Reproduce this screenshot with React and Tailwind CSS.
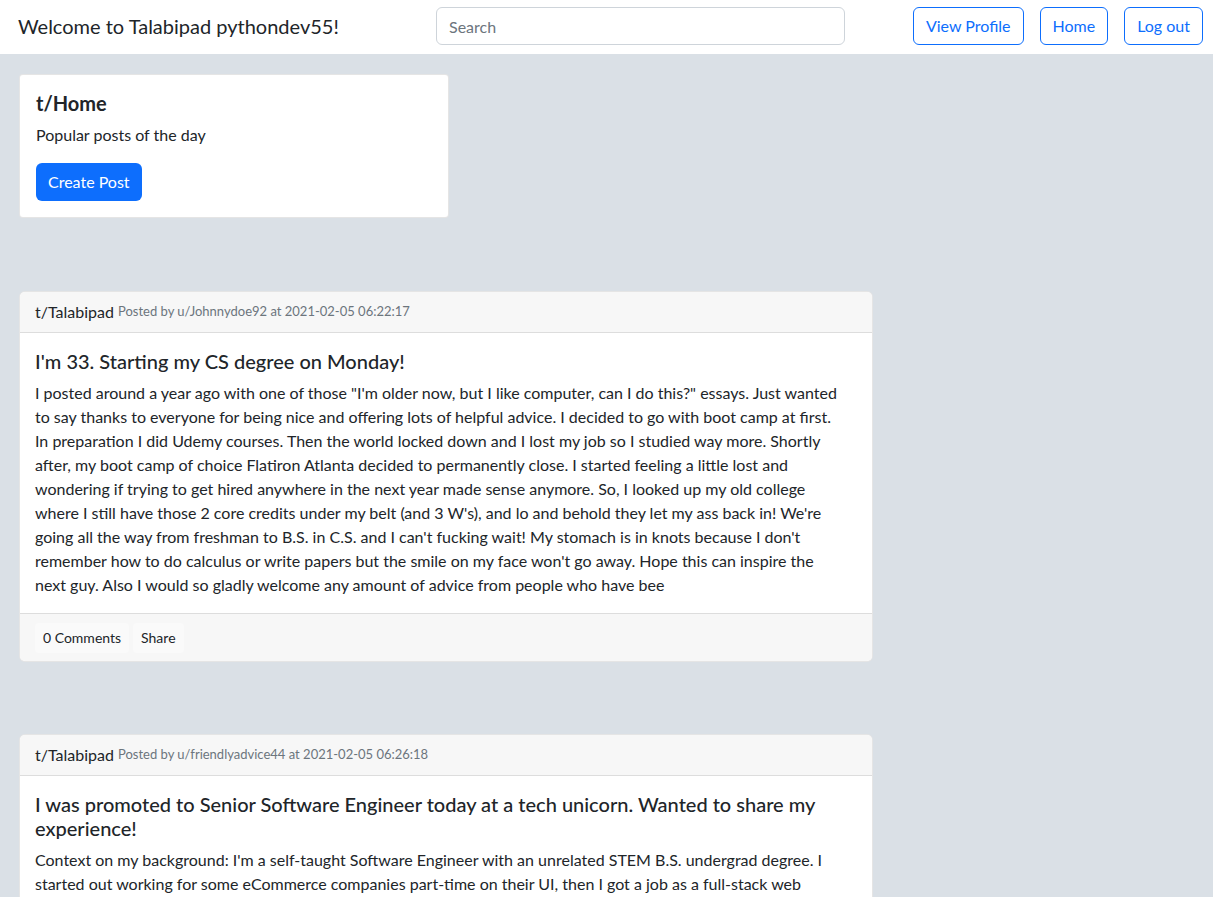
import React from 'react';

const posts = [
  {
    user: 'Johnnydoe92',
    at: '2021-02-05 06:22:17',
    title: ["I'm 33. Starting my CS degree on Monday!"],
    body: [
      'I posted around a year ago with one of those "I\'m older now, but I like computer, can I do this?" essays. Just wanted',
      'to say thanks to everyone for being nice and offering lots of helpful advice. I decided to go with boot camp at first.',
      'In preparation I did Udemy courses. Then the world locked down and I lost my job so I studied way more. Shortly',
      'after, my boot camp of choice Flatiron Atlanta decided to permanently close. I started feeling a little lost and',
      'wondering if trying to get hired anywhere in the next year made sense anymore. So, I looked up my old college',
      "where I still have those 2 core credits under my belt (and 3 W's), and lo and behold they let my ass back in! We're",
      "going all the way from freshman to B.S. in C.S. and I can't fucking wait! My stomach is in knots because I don't",
      "remember how to do calculus or write papers but the smile on my face won't go away. Hope this can inspire the",
      'next guy. Also I would so gladly welcome any amount of advice from people who have bee',
    ],
    comments: 0,
  },
  {
    user: 'friendlyadvice44',
    at: '2021-02-05 06:26:18',
    title: ['I was promoted to Senior Software Engineer today at a tech unicorn. Wanted to share my', 'experience!'],
    body: [
      "Context on my background: I'm a self-taught Software Engineer with an unrelated STEM B.S. undergrad degree. I",
      'started out working for some eCommerce companies part-time on their UI, then I got a job as a full-stack web',
    ],
    comments: 0,
  },
];

const Navbar = () => (
  <nav className="flex items-center h-[54px] pb-[2px] pl-[18px] pr-[10px] bg-white">
    <div className="w-[418px] text-[20px] leading-[30px] text-[#212529]">Welcome to Talabipad pythondev55!</div>
    <input
      type="text"
      placeholder="Search"
      className="w-[409px] h-[38px] px-3 text-base text-[#212529] placeholder:text-[#6c757d] bg-white border border-[#ced4da] rounded-[6px] outline-none"
    />
    <div className="ml-auto flex gap-4">
      {['View Profile', 'Home', 'Log out'].map((label) => (
        <button
          key={label}
          className="h-[38px] px-3 text-base text-[#0d6efd] border border-[#0d6efd] rounded-[6px] bg-white"
        >
          {label}
        </button>
      ))}
    </div>
  </nav>
);

const PostCard = ({ post }) => (
  <div className="w-[854px] bg-white border border-black/10 rounded-[6px] overflow-hidden">
    <div className="h-[41px] px-[15px] flex items-center bg-[#f7f7f7] border-b border-black/10 text-base text-[#212529]">
      <span>t/Talabipad</span>
      <span className="ml-1 text-[13px] text-[#6c757d]">
        Posted by u/{post.user} at {post.at}
      </span>
    </div>
    <div className="px-[15px] pt-4 pb-4">
      <h5 className="mb-2 text-[20px] leading-6 font-medium text-[#212529]">
        {post.title.map((l) => (
          <span key={l} className="block whitespace-nowrap">{l}</span>
        ))}
      </h5>
      <p className="text-base leading-6 text-[#212529]">
        {post.body.map((l) => (
          <span key={l} className="block whitespace-nowrap">{l}</span>
        ))}
      </p>
    </div>
    <div className="h-[48px] px-[15px] flex items-center gap-1 bg-[#f7f7f7] border-t border-black/10">
      <button className="h-[30px] px-2 text-sm text-[#212529] bg-[#fafafa] rounded-[4px]">
        {post.comments} Comments
      </button>
      <button className="h-[30px] px-2 text-sm text-[#212529] bg-[#fafafa] rounded-[4px]">Share</button>
    </div>
  </div>
);

export default function App() {
  return (
    <div className="min-h-screen bg-[#dae0e6] font-['Lato',sans-serif]">
      <Navbar />
      <main className="pl-[19px] pt-[20px] pb-10 flex flex-col">
        <div className="w-[430px] p-4 bg-white border border-black/10 rounded-[4px]">
          <h5 className="mb-2 text-[20px] leading-6 font-bold text-[#212529]">t/Home</h5>
          <p className="mb-4 text-base leading-6 text-[#212529]">Popular posts of the day</p>
          <button className="h-[38px] px-3 text-base text-white bg-[#0d6efd] rounded-[6px]">Create Post</button>
        </div>
        <div className="mt-[73px] flex flex-col gap-[72px]">
          {posts.map((p) => (
            <PostCard key={p.user} post={p} />
          ))}
        </div>
      </main>
    </div>
  );
}
